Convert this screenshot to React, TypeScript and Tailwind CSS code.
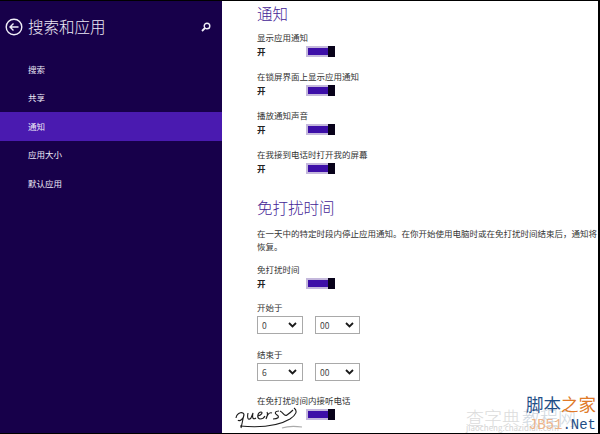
const FONT = "font-['Noto_Sans_CJK_SC','Liberation_Sans',sans-serif]";

function Toggle() {
  return (
    <div className="flex h-[11px] w-[29px] items-stretch bg-[#c4b8dc] pl-[1px] py-[1px] pr-0">
      <div className="m-[1px] mr-0 flex-1 bg-[#3d0fa8]" />
      <div className="-my-[1px] w-[7px] bg-[#08021a]" />
    </div>
  );
}

function Setting({ label, className = "", hideState = false }: { label: string; className?: string; hideState?: boolean }) {
  return (
    <div className={`flex flex-col ${className}`}>
      <div className="h-[14px] text-[8.5px] leading-[14px] text-[#333]">{label}</div>
      <div className="flex h-[14px] items-center">
        <div className="w-[49px] text-[8.5px] font-bold text-[#222]">{hideState ? "" : "开"}</div>
        <Toggle />
      </div>
    </div>
  );
}

function Select({ value, width }: { value: string; width: string }) {
  return (
    <div className={`flex h-[18px] items-center justify-between border border-[#a9a9a9] bg-white pl-[4px] pr-[5px] ${width}`}>
      <span className="text-[8.5px] text-[#444]">{value}</span>
      <svg width="9" height="6" viewBox="0 0 9 6" fill="none" stroke="#1a1a1a" strokeWidth="1.8">
        <path d="M1 1l3.5 3.5L8 1" />
      </svg>
    </div>
  );
}

function TimeField({ label, hour, className = "" }: { label: string; hour: string; className?: string }) {
  return (
    <div className={className}>
      <div className="h-[14px] text-[8.5px] leading-[14px] text-[#333]">{label}</div>
      <div className="mt-[2px] flex gap-[12px]">
        <Select value={hour} width="w-[46px]" />
        <Select value="00" width="w-[45px]" />
      </div>
    </div>
  );
}

const NAV = ["搜索", "共享", "通知", "应用大小", "默认应用"];

export default function App() {
  return (
    <div className={`flex h-[434px] w-[600px] overflow-hidden border-y border-y-black border-r-2 border-r-black bg-white ${FONT}`}>
      <aside className="h-full w-[222px] shrink-0 bg-[#17004a]">
        <header className="flex h-[51px] items-center pl-[5px] pr-[11px]">
          <svg width="18" height="18" viewBox="0 0 18 18" fill="none" stroke="#f1eef8" strokeWidth="1.4">
            <circle cx="9" cy="9" r="7.8" />
            <path d="M13.5 9H5M8.5 5.5L5 9l3.5 3.5" />
          </svg>
          <h1 className="ml-[5px] flex-1 text-[15.5px] font-light leading-none text-[#eeeaf6]">搜索和应用</h1>
          <svg width="10" height="10" viewBox="0 0 10 10" fill="none" stroke="#f1eef8" strokeWidth="1.4">
            <circle cx="6" cy="4" r="2.8" />
            <path d="M4 6L1 9" strokeWidth="1.8" />
          </svg>
        </header>
        <nav className="mt-[3px] flex flex-col">
          {NAV.map((item) => (
            <div
              key={item}
              className={`flex h-[28.5px] items-center pl-[28px] text-[8.5px] text-[#eee9f6] ${item === "通知" ? "bg-[#4a1ab0]" : ""}`}
            >
              {item}
            </div>
          ))}
        </nav>
      </aside>

      <main className="relative flex-1 pl-[35px]">
        <h2 className="mt-[2px] h-[20px] text-[15.5px] font-light leading-[20px] text-[#452496]">通知</h2>
        <Setting label="显示应用通知" className="mt-[7px]" />
        <Setting label="在锁屏界面上显示应用通知" className="mt-[11px]" />
        <Setting label="播放通知声音" className="mt-[11px]" />
        <Setting label="在我接到电话时打开我的屏幕" className="mt-[11px]" />

        <h2 className="mt-[22px] h-[20px] text-[15.5px] font-light leading-[20px] text-[#452496]">免打扰时间</h2>
        <p className="mt-[10px] text-[8.5px] leading-[13px] text-[#333]">
          在一天中的特定时段内停止应用通知。在你开始使用电脑时或在免打扰时间结束后，通知将恢复。
        </p>
        <Setting label="免打扰时间" className="mt-[9px]" />
        <TimeField label="开始于" hour="0" className="mt-[10px]" />
        <TimeField label="结束于" hour="6" className="mt-[13px]" />
        <Setting label="在免打扰时间内接听电话" className="mt-[12px]" hideState />

        <svg className="absolute bottom-0 left-[12px]" width="72" height="27" viewBox="0 0 72 27" fill="none" stroke="#1c1c1c" strokeWidth="1.1">
          <path d="M2 12c1-6 8-7 8-3 0 4-5 7-6 5M10 8c-1 5-2 10-3 14" />
          <path d="M14 7c-1 5 0 8 3 5l2-5c-1 5 0 7 3 5" />
          <path d="M24 10c4-1 5-4 3-4-3 0-5 6-1 7 2 0 4-1 5-3" />
          <path d="M33 6c1 2 0 5-1 7 1-4 3-7 6-6" />
          <path d="M45 5c-4 0-5 2-2 4 3 2 1 4-4 4" />
          <path d="M46 5c4 2 4 6 7 4 3-2 4-3 6-5" />
          <path d="M60 2c4 3 2 7-4 11-10 6-28 9-50 7" />
          <path d="M48 22c6-2 12-2 20-1" stroke="#aaa" />
        </svg>

        <div className="pointer-events-none absolute bottom-0 right-0 h-[38px] w-[132px]">
          <div className="absolute left-0 top-[12px] text-[18px] font-light leading-[20px] text-[#dcdcdc]">查字典</div>
          <div className="absolute left-[56px] top-[12px] text-[18px] font-light leading-[20px] text-[#d0d8e0]">教程网</div>
          <div className="absolute left-0 top-[28px] text-[8px] leading-[10px] text-[#d4d4d4]">jiaocheng.chazidian.com</div>
          <div className="absolute right-[2px] top-0 flex text-[17.5px] leading-[18px]">
            <span className="text-[#1f4e86]">脚本</span>
            <span className="text-[#e07a28]">之家</span>
          </div>
          <div className="absolute right-[2px] top-[22px] font-['Liberation_Mono',monospace] text-[14px] leading-[16px] text-[#1f4e86]">
            <span className="text-[#ecb48a]">JB51</span>.Net
          </div>
        </div>
      </main>
    </div>
  );
}
